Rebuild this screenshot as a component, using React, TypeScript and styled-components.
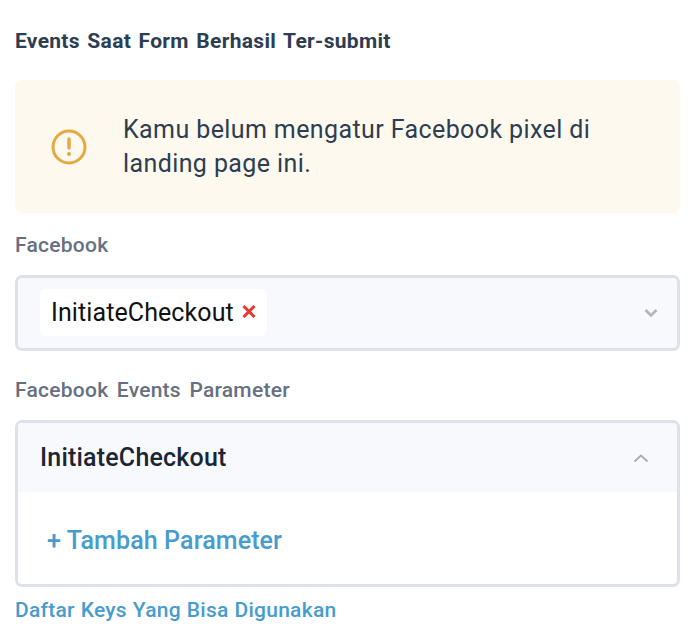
import styled, { createGlobalStyle } from 'styled-components';

const GlobalStyle = createGlobalStyle`
  html, body {
    margin: 0;
    padding: 0;
    background: #fff;
    font-family: Roboto, "Liberation Sans", sans-serif;
  }
  * { box-sizing: border-box; }
`;

const Page = styled.div`
  width: 700px;
  height: 644px;
  padding: 29px 20px 0 15px;
  overflow: hidden;
  display: flex;
  flex-direction: column;
`;

const Title = styled.h3`
  margin: 0;
  font-size: 21px;
  line-height: 24px;
  font-weight: 700;
  color: #2d3d52;
  letter-spacing: 0.3px;
  word-spacing: 2px;
`;

const Alert = styled.div`
  margin-top: 27px;
  height: 133px;
  background: #fdf9ef;
  border-radius: 7px;
  display: flex;
  align-items: center;
  padding-left: 36px;
  gap: 36px;
`;

const AlertText = styled.p`
  margin: 0;
  width: 500px;
  font-size: 25px;
  line-height: 34px;
  color: #2d3d52;
  letter-spacing: 0.4px;
`;

const Label = styled.div<{ $gap: number }>`
  margin-top: ${({ $gap }) => $gap}px;
  font-size: 21px;
  line-height: 24px;
  font-weight: 500;
  color: #667080;
  letter-spacing: 0.25px;
  word-spacing: 3px;
`;

const Select = styled.div`
  margin-top: 18px;
  height: 76px;
  background: #f8f9fc;
  border: 3px solid #dfe1ea;
  border-radius: 7px;
  display: flex;
  align-items: center;
  justify-content: space-between;
  padding: 0 19px 1px 22px;
`;

const Tag = styled.div`
  height: 47px;
  padding: 0 11px;
  background: #fff;
  border-radius: 6px;
  display: flex;
  align-items: center;
  gap: 8px;
  font-size: 25px;
  color: #111;
  letter-spacing: 0.1px;
`;

const Panel = styled.div`
  margin-top: 18px;
  height: 167px;
  border: 3px solid #dfe1ea;
  border-radius: 7px;
  overflow: hidden;
`;

const PanelHeader = styled.div`
  height: 69px;
  background: #f8f9fc;
  display: flex;
  align-items: center;
  justify-content: space-between;
  padding: 0 28px 0 22px;
  font-size: 25px;
  font-weight: 500;
  color: #1b2635;
  letter-spacing: 0.2px;
`;

const PanelBody = styled.div`
  height: 92px;
  display: flex;
  align-items: center;
  padding: 4px 0 0 29px;
`;

const AddLink = styled.a`
  font-size: 25px;
  font-weight: 500;
  color: #479ccf;
  letter-spacing: 0.12px;
`;

const KeysLink = styled.a`
  margin-top: 11px;
  font-size: 21px;
  line-height: 24px;
  font-weight: 500;
  color: #479ccf;
  letter-spacing: 0.25px;
  word-spacing: 0.5px;
`;

const CrossIcon = styled.svg`
  width: 14px;
  height: 13px;
  margin-bottom: 2px;
`;

const WarningIcon = () => (
  <svg width="36" height="36" viewBox="0 0 36 36" fill="none">
    <circle cx="18" cy="18" r="16" stroke="#e4a93f" strokeWidth="3" />
    <path d="M18 10v9" stroke="#e4a93f" strokeWidth="3.4" strokeLinecap="round" />
    <circle cx="18" cy="25" r="2" fill="#e4a93f" />
  </svg>
);

const Cross = () => (
  <CrossIcon viewBox="0 0 14 13" fill="none">
    <path d="M1.5 1l11 11M12.5 1l-11 11" stroke="#e53a2f" strokeWidth="3" />
  </CrossIcon>
);

const ChevronDown = () => (
  <svg width="14" height="10" viewBox="0 0 14 10" fill="none">
    <path d="M1.5 2l5.5 5.5L12.5 2" stroke="#b3b4b8" strokeWidth="2.6" />
  </svg>
);

const ChevronUp = () => (
  <svg width="16" height="10" viewBox="0 0 16 10" fill="none">
    <path d="M1.5 8.5L8 2.5l6.5 6" stroke="#a9abb0" strokeWidth="1.8" />
  </svg>
);

export default function App() {
  return (
    <Page>
      <GlobalStyle />
      <Title>Events Saat Form Berhasil Ter-submit</Title>
      <Alert>
        <WarningIcon />
        <AlertText>Kamu belum mengatur Facebook pixel di landing page ini.</AlertText>
      </Alert>
      <Label $gap={20}>Facebook</Label>
      <Select>
        <Tag>
          InitiateCheckout
          <Cross />
        </Tag>
        <ChevronDown />
      </Select>
      <Label $gap={27}>Facebook Events Parameter</Label>
      <Panel>
        <PanelHeader>
          InitiateCheckout
          <ChevronUp />
        </PanelHeader>
        <PanelBody>
          <AddLink>+ Tambah Parameter</AddLink>
        </PanelBody>
      </Panel>
      <KeysLink>Daftar Keys Yang Bisa Digunakan</KeysLink>
    </Page>
  );
}
